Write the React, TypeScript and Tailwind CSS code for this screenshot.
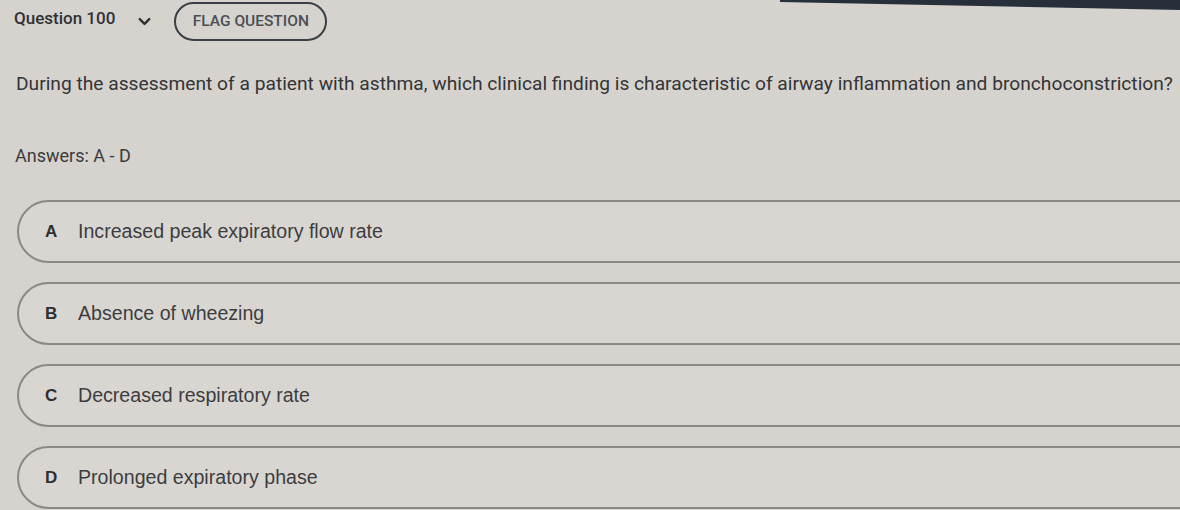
import { ChevronDown } from "lucide-react";

const options = [
  { key: "A", text: "Increased peak expiratory flow rate" },
  { key: "B", text: "Absence of wheezing" },
  { key: "C", text: "Decreased respiratory rate" },
  { key: "D", text: "Prolonged expiratory phase" },
];

export default function App() {
  return (
    <div className="relative h-[510px] w-[1180px] overflow-hidden bg-[#d6d3ce] text-[#3b3c3e]">
      {/* dark edge of the monitor bezel */}
      <svg className="absolute right-0 top-0" width="400" height="12" viewBox="0 0 400 12">
        <polygon points="0,0 400,0 400,10 0,2" fill="#27303a" />
      </svg>

      <header className="flex h-[39px] items-center pl-[14px] pt-[4px] [font-family:Roboto,sans-serif]">
        <span className="mb-[5px] text-[17px] font-medium text-[#2f3134]">Question 100</span>
        <ChevronDown className="ml-[20px] h-[19px] w-[19px] text-[#2f3134]" strokeWidth={3} />
        <button className="ml-[20px] flex h-[39px] w-[153px] items-center justify-center rounded-full border-2 border-[#3a3f45] text-[15.5px] font-medium text-[#4a4e54]">
          FLAG QUESTION
        </button>
      </header>

      <p className="mt-[33px] pl-[16px] text-[19.2px] leading-[24px] text-[#333436] [font-family:Roboto,sans-serif]">
        During the assessment of a patient with asthma, which clinical finding is characteristic of airway
        inflammation and bronchoconstriction?
      </p>

      <p className="mt-[50px] pl-[15px] text-[18px] leading-[20px] text-[#3a3b3d] [font-family:Roboto,sans-serif]">
        Answers: A - D
      </p>

      <div className="mt-[34px] flex flex-col gap-[19px] pl-[17px]">
        {options.map((o) => (
          <div
            key={o.key}
            className="flex h-[63px] w-[1220px] items-center rounded-l-[32px] border-2 border-[#898986] bg-[#d9d6d1] pl-[26px] [font-family:'Liberation_Sans',Arial,sans-serif]"
          >
            <span className="w-[33px] text-[17px] font-bold text-[#2e2f31]">{o.key}</span>
            <span className="text-[19.6px] text-[#3c3d3f]">{o.text}</span>
          </div>
        ))}
      </div>
    </div>
  );
}
